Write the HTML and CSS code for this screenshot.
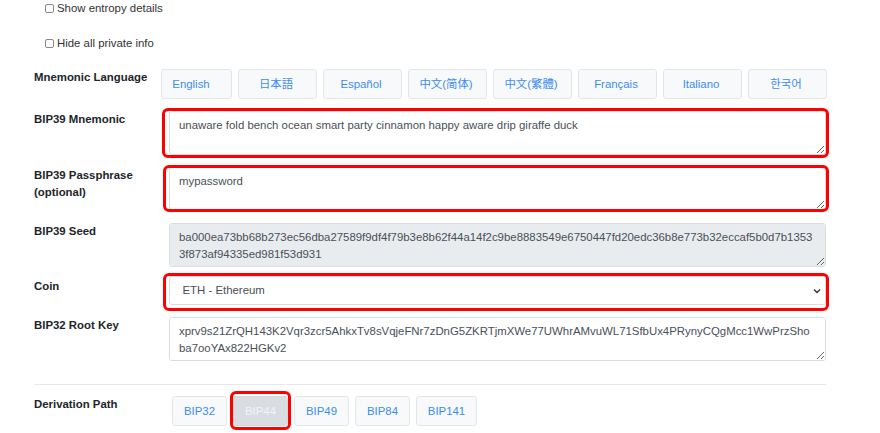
FILE: index.html
```html
<!DOCTYPE html>
<html lang="en">
<head>
    <meta charset="UTF-8">
    <meta name="viewport" content="width=device-width, initial-scale=1.0">
    <title>Mnemonic Code Converter</title>
    <link rel="stylesheet" href="styles.css">
</head>
<body>
    <div class="page">
        <div class="checks">
            <label class="check"><input type="checkbox"><span>Show entropy details</span></label>
            <label class="check"><input type="checkbox"><span>Hide all private info</span></label>
        </div>

        <div class="row">
            <div class="row-label">Mnemonic Language</div>
            <div class="row-body langs">
                <button class="btn lang lang-en">English</button>
                <button class="btn lang" lang="ja">日本語</button>
                <button class="btn lang">Español</button>
                <button class="btn lang" lang="zh-Hans">中文(简体)</button>
                <button class="btn lang" lang="zh-Hant">中文(繁體)</button>
                <button class="btn lang">Français</button>
                <button class="btn lang">Italiano</button>
                <button class="btn lang" lang="ko">한국어</button>
            </div>
        </div>

        <div class="row">
            <div class="row-label">BIP39 Mnemonic</div>
            <div class="row-body marked mark-text">
                <textarea class="field" rows="2">unaware fold bench ocean smart party cinnamon happy aware drip giraffe duck</textarea>
            </div>
        </div>

        <div class="row row-pass">
            <div class="row-label">BIP39 Passphrase (optional)</div>
            <div class="row-body marked mark-pass">
                <textarea class="field field-pass" rows="2">mypassword</textarea>
            </div>
        </div>

        <div class="row row-seed">
            <div class="row-label">BIP39 Seed</div>
            <div class="row-body">
                <textarea class="field" rows="2" readonly>ba000ea73bb68b273ec56dba27589f9df4f79b3e8b62f44a14f2c9be8883549e6750447fd20edc36b8e773b32eccaf5b0d7b13533f873af94335ed981f53d931</textarea>
            </div>
        </div>

        <div class="row">
            <div class="row-label row-label-coin">Coin</div>
            <div class="row-body marked mark-coin">
                <select class="field select">
                    <option>ETH - Ethereum</option>
                </select>
                <svg class="chevron" width="8" height="6" viewBox="0 0 8 6"><path d="M1 1.5 L4 4.5 L7 1.5" fill="none" stroke="#333" stroke-width="1.4"/></svg>
            </div>
        </div>

        <div class="row">
            <div class="row-label">BIP32 Root Key</div>
            <div class="row-body">
                <textarea class="field" rows="2">xprv9s21ZrQH143K2Vqr3zcr5AhkxTv8sVqjeFNr7zDnG5ZKRTjmXWe77UWhrAMvuWL71SfbUx4PRynyCQgMcc1WwPrzShoba7ooYAx822HGKv2</textarea>
            </div>
        </div>

        <hr class="divider">

        <div class="row">
            <div class="row-label">Derivation Path</div>
            <div class="row-body tabs">
                <button class="btn tab">BIP32</button>
                <button class="btn tab active marked mark-tab">BIP44</button>
                <button class="btn tab">BIP49</button>
                <button class="btn tab">BIP84</button>
                <button class="btn tab tab-wide">BIP141</button>
            </div>
        </div>
    </div>
</body>
</html>
```

FILE: styles.css
```css
body {
    margin: 0;
    background: #ffffff;
    color: #212529;
    font-family: "Liberation Sans", Arial, "Noto Sans CJK SC", sans-serif;
    font-size: 11.4px;
    line-height: 17px;
}

.page {
    width: 792px;
    padding-left: 34px;
}

/* checkbox options */
.checks {
    padding-left: 11px;
}

.check {
    display: flex;
    align-items: center;
    height: 17px;
    margin-bottom: 17.5px;
    color: #333;
}

.check input {
    appearance: none;
    width: 9px;
    height: 9px;
    margin: 0 3px 0 0;
    border: 1px solid #8a8a8a;
    border-radius: 2px;
    background: #fff;
}

/* form rows */
.row {
    display: flex;
    margin-bottom: 12px;
}

.row-label {
    width: 135px;
    flex-shrink: 0;
    font-weight: bold;
    padding-right: 10px;
    box-sizing: border-box;
}

.row-label-coin {
    padding-top: 2px;
}

.row-body {
    width: 657px;
    position: relative;
}

.row:first-of-type {
    margin-bottom: 11px;
}

.row-pass {
    margin-bottom: 13px;
}

.row-seed {
    margin-bottom: 9px;
}

.field {
    display: block;
    width: 100%;
    box-sizing: border-box;
    margin: 0;
    font: inherit;
    line-height: 17px;
    color: #495057;
    background: #fff;
    border: 1px solid #d9dde1;
    border-radius: 3px;
    padding: 4.5px 9px;
    height: 44px;
    resize: vertical;
    outline: none;
}

.field-pass {
    height: 43px;
}

.field[readonly] {
    background: #e9ecef;
}

.select {
    appearance: none;
    height: 29px;
    padding: 0 12.5px;
    color: #495057;
}

.chevron {
    position: absolute;
    right: 5px;
    top: 12px;
}

/* red outline around the highlighted controls */
.marked {
    position: relative;
}

.marked::after {
    content: '';
    position: absolute;
    border: 3px solid #ff0000;
    border-radius: 6px;
    pointer-events: none;
}

.mark-text::after {
    inset: -3px -3px -3px -7px;
}

.mark-pass::after {
    inset: -2px -3px -2px -6px;
}

.mark-coin::after {
    inset: -3px -2.5px -5.5px -6px;
}

.mark-tab::after {
    inset: -6px -4px -5px -4px;
}

/* buttons */
.btn {
    flex-shrink: 0;
    height: 30px;
    margin: 0;
    padding: 0;
    font: inherit;
    color: #3a8df3;
    background: #f8f9fa;
    border: 1px solid #e3e6e9;
    border-radius: 3px;
    text-align: center;
}

.langs {
    display: flex;
    gap: 6px;
    margin-left: -8px;
}

.lang {
    width: 79px;
    padding-right: 3px;
}

.lang-en {
    width: 71px;
    padding-right: 11px;
}

.tabs {
    display: flex;
    gap: 6px;
    padding-left: 3px;
}

.tab {
    width: 55px;
}

.tab-wide {
    width: 61px;
}

.tab.active {
    background: #d9dde1;
    border-color: #d3d7db;
    color: #f2f4f6;
}

.divider {
    border: 0;
    border-top: 1px solid #e8e8e8;
    margin: 23px 0 11px;
    width: 792px;
}
```
